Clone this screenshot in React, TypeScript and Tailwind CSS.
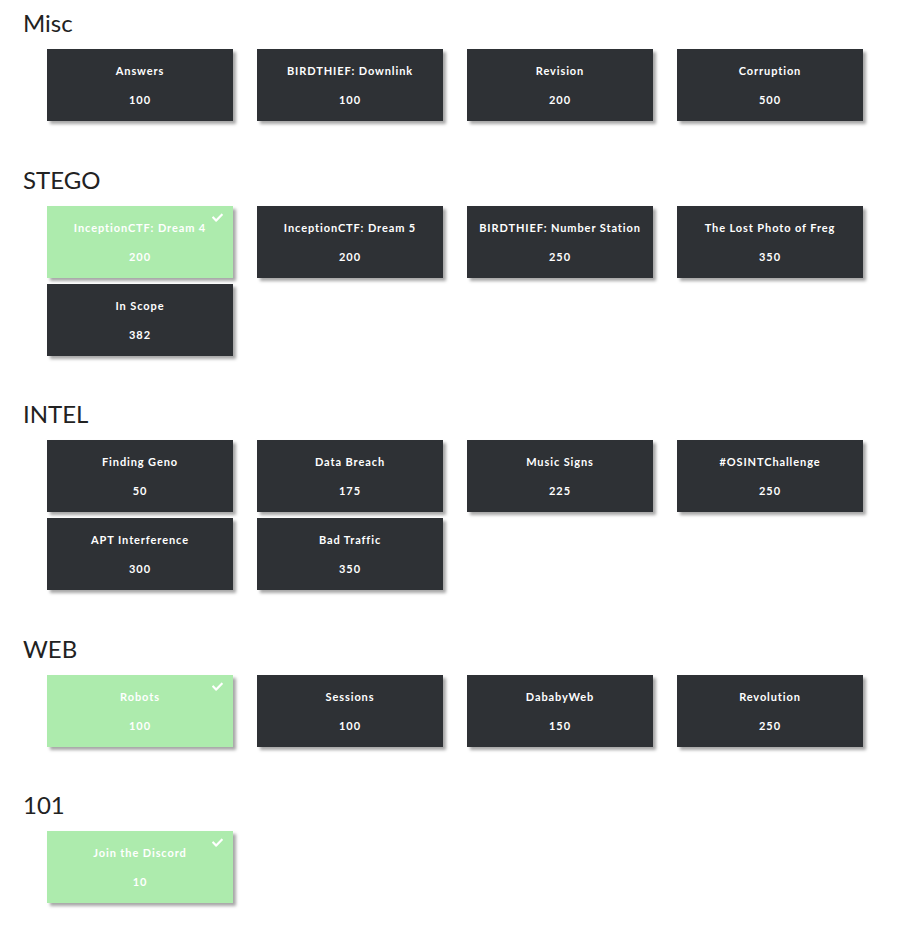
import React from "react";

type Chal = { name: string; pts: number; solved?: boolean };

const sections: { title: string; items: Chal[] }[] = [
  {
    title: "Misc",
    items: [
      { name: "Answers", pts: 100 },
      { name: "BIRDTHIEF: Downlink", pts: 100 },
      { name: "Revision", pts: 200 },
      { name: "Corruption", pts: 500 },
    ],
  },
  {
    title: "STEGO",
    items: [
      { name: "InceptionCTF: Dream 4", pts: 200, solved: true },
      { name: "InceptionCTF: Dream 5", pts: 200 },
      { name: "BIRDTHIEF: Number Station", pts: 250 },
      { name: "The Lost Photo of Freg", pts: 350 },
      { name: "In Scope", pts: 382 },
    ],
  },
  {
    title: "INTEL",
    items: [
      { name: "Finding Geno", pts: 50 },
      { name: "Data Breach", pts: 175 },
      { name: "Music Signs", pts: 225 },
      { name: "#OSINTChallenge", pts: 250 },
      { name: "APT Interference", pts: 300 },
      { name: "Bad Traffic", pts: 350 },
    ],
  },
  {
    title: "WEB",
    items: [
      { name: "Robots", pts: 100, solved: true },
      { name: "Sessions", pts: 100 },
      { name: "DababyWeb", pts: 150 },
      { name: "Revolution", pts: 250 },
    ],
  },
  {
    title: "101",
    items: [{ name: "Join the Discord", pts: 10, solved: true }],
  },
];

function Check() {
  return (
    <svg
      className="absolute right-[10px] top-[7px]"
      width="11"
      height="9"
      viewBox="0 0 512 400"
      fill="white"
    >
      <path d="M173.9 392.1L7.5 225.7c-10-10-10-26.2 0-36.2l36.2-36.2c10-10 26.2-10 36.2 0L192 265.4 432.1 25.3c10-10 26.2-10 36.2 0l36.2 36.2c10 10 10 26.2 0 36.2L210.1 392.1c-10 10-26.2 10-36.2 0z" />
    </svg>
  );
}

function Card({ c }: { c: Chal }) {
  return (
    <div
      className={
        "relative h-[72px] w-[186px] pt-[14px] text-center text-white font-bold text-[11px] tracking-[0.9px] shadow-[3px_3px_3px_rgba(0,0,0,0.35)] " +
        (c.solved ? "bg-[#adebad]" : "bg-[#2e3135]")
      }
    >
      {c.solved && <Check />}
      <div className="leading-4 whitespace-nowrap">{c.name}</div>
      <div className="leading-4 mt-[13px]">{c.pts}</div>
    </div>
  );
}

export default function App() {
  return (
    <div
      className="bg-white min-h-[928px] w-[908px] pt-[8px] pl-[23px]"
      style={{ fontFamily: "Lato, 'Open Sans', sans-serif" }}
    >
      {sections.map((s) => (
        <div key={s.title} className="mb-[43.5px]">
          <h2 className="text-[24px] leading-[29px] text-[#222222] font-normal mb-[12px]">
            {s.title}
          </h2>
          <div className="ml-[24px] grid grid-cols-[repeat(4,186px)] gap-x-[24px] gap-y-[6px]">
            {s.items.map((c) => (
              <Card key={c.name} c={c} />
            ))}
          </div>
        </div>
      ))}
    </div>
  );
}
